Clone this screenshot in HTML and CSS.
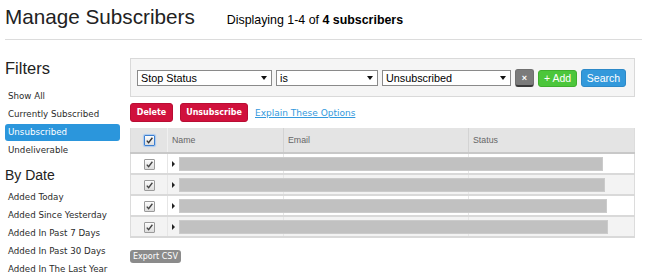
FILE: index.html
```html
<!DOCTYPE html>
<html lang="en">
<head>
    <meta charset="UTF-8">
    <meta name="viewport" content="width=device-width, initial-scale=1.0">
    <title>Manage Subscribers</title>
    <link rel="stylesheet" href="styles.css">
</head>
<body>
    <div class="page-header">
        <h1>Manage Subscribers</h1>
        <div class="count">Displaying 1-4 of <strong>4 subscribers</strong></div>
    </div>

    <div class="layout">
        <div class="sidebar">
            <h3>Filters</h3>
            <ul class="filter-list">
                <li><a href="#">Show All</a></li>
                <li><a href="#">Currently Subscribed</a></li>
                <li class="active"><a href="#">Unsubscribed</a></li>
                <li><a href="#">Undeliverable</a></li>
            </ul>
            <h4>By Date</h4>
            <ul class="filter-list date-list">
                <li><a href="#">Added Today</a></li>
                <li><a href="#">Added Since Yesterday</a></li>
                <li><a href="#">Added In Past 7 Days</a></li>
                <li><a href="#">Added In Past 30 Days</a></li>
                <li><a href="#">Added In The Last Year</a></li>
            </ul>
        </div>

        <div class="main">
            <div class="search-box">
                <span class="select field-select">
                    <select>
                        <option>Stop Status</option>
                    </select>
                </span>
                <span class="select op-select">
                    <select>
                        <option>is</option>
                    </select>
                </span>
                <span class="select value-select">
                    <select>
                        <option>Unsubscribed</option>
                    </select>
                </span>
                <button class="btn btn-remove">&times;</button>
                <button class="btn btn-add">+ Add</button>
                <button class="btn btn-search">Search</button>
            </div>

            <div class="actions">
                <button class="btn btn-danger btn-delete">Delete</button>
                <button class="btn btn-danger btn-unsub">Unsubscribe</button>
                <a href="#" class="explain">Explain These Options</a>
            </div>

            <table class="subscribers">
                <colgroup>
                    <col class="col-check">
                    <col class="col-name">
                    <col class="col-email">
                    <col class="col-status">
                </colgroup>
                <thead>
                    <tr>
                        <th class="check"><span class="cb cb-focus"><svg viewBox="0 0 9 9" width="9" height="9"><path d="M1.8 4.6 L3.6 6.6 L7.4 1.8" fill="none" stroke="#333" stroke-width="1.4"/></svg></span></th>
                        <th>Name</th>
                        <th>Email</th>
                        <th>Status</th>
                    </tr>
                </thead>
                <tbody>
                    <tr>
                        <td class="check"><span class="cb"><svg viewBox="0 0 9 9" width="9" height="9"><path d="M1.8 4.6 L3.6 6.6 L7.4 1.8" fill="none" stroke="#444" stroke-width="1.4"/></svg></span></td>
                        <td class="name"><span class="caret"></span><span class="bar" style="width: 424px"></span></td>
                        <td></td>
                        <td></td>
                    </tr>
                    <tr>
                        <td class="check"><span class="cb"><svg viewBox="0 0 9 9" width="9" height="9"><path d="M1.8 4.6 L3.6 6.6 L7.4 1.8" fill="none" stroke="#444" stroke-width="1.4"/></svg></span></td>
                        <td class="name"><span class="caret"></span><span class="bar" style="width: 426px"></span></td>
                        <td></td>
                        <td></td>
                    </tr>
                    <tr>
                        <td class="check"><span class="cb"><svg viewBox="0 0 9 9" width="9" height="9"><path d="M1.8 4.6 L3.6 6.6 L7.4 1.8" fill="none" stroke="#444" stroke-width="1.4"/></svg></span></td>
                        <td class="name"><span class="caret"></span><span class="bar" style="width: 428px"></span></td>
                        <td></td>
                        <td></td>
                    </tr>
                    <tr>
                        <td class="check"><span class="cb"><svg viewBox="0 0 9 9" width="9" height="9"><path d="M1.8 4.6 L3.6 6.6 L7.4 1.8" fill="none" stroke="#444" stroke-width="1.4"/></svg></span></td>
                        <td class="name"><span class="caret"></span><span class="bar" style="width: 429px"></span></td>
                        <td></td>
                        <td></td>
                    </tr>
                </tbody>
            </table>

            <button class="btn btn-export">Export CSV</button>
        </div>
    </div>
</body>
</html>
```

FILE: styles.css
```css
body {
    margin: 0;
    font-family: 'Liberation Sans', Arial, sans-serif;
    color: #333;
    background: #fff;
}
.page-header {
    display: flex;
    align-items: baseline;
    margin: 0 8px 0 5px;
    padding-top: 5px;
    height: 40px;
    box-sizing: border-box;
    border-bottom: 1px solid #dcdcdc;
}
h1 {
    margin: 0;
    font-size: 20.7px;
    line-height: 24px;
    font-weight: normal;
    color: #222;
}
.count {
    margin-left: 32px;
    font-size: 12.4px;
    color: #000;
}
.layout {
    display: flex;
    padding: 18px 0 0 5px;
}
.sidebar {
    width: 115px;
    flex: none;
}
.sidebar h3 {
    margin: 0 0 10px 0;
    font-size: 16.5px;
    line-height: 20px;
    font-weight: normal;
    color: #222;
}
.sidebar h4 {
    margin: 7px 0 5px 0;
    font-size: 14px;
    line-height: 18px;
    font-weight: normal;
    color: #222;
}
.filter-list {
    list-style: none;
    margin: 0;
    padding: 0;
}
.filter-list li {
    height: 17px;
    margin-bottom: 1px;
    border-radius: 3px;
}
.filter-list a {
    display: block;
    padding-left: 3px;
    font-family: 'DejaVu Sans', Verdana, sans-serif;
    font-size: 8.7px;
    line-height: 17px;
    color: #2b2b2b;
    text-decoration: none;
}
.filter-list li.active {
    background-color: #2b96dc;
}
.filter-list li.active a {
    color: #fff;
}
.main {
    margin-left: 10px;
    width: 505px;
}
.search-box {
    display: flex;
    align-items: center;
    gap: 4px;
    height: 39px;
    padding: 1px 6px 0 6px;
    box-sizing: border-box;
    border: 1px solid #d9d9d9;
    background-color: #f5f5f5;
}
.select {
    position: relative;
    display: block;
    flex: none;
}
.select select {
    appearance: none;
    display: block;
    width: 100%;
    height: 16px;
    margin: 0;
    padding: 0 12px 0 3px;
    border: 1px solid #8a8a8a;
    border-radius: 0;
    background: #fff;
    font-family: 'Liberation Sans', Arial, sans-serif;
    font-size: 10.8px;
    color: #000;
}
.select::after {
    content: "";
    position: absolute;
    right: 5px;
    top: 6px;
    border-left: 3px solid transparent;
    border-right: 3px solid transparent;
    border-top: 4px solid #111;
}
.field-select {
    width: 135px;
}
.op-select {
    width: 102px;
}
.value-select {
    width: 129px;
}
.btn {
    margin: 0;
    padding: 0;
    border: 1px solid transparent;
    border-radius: 3px;
    font-family: 'Liberation Sans', Arial, sans-serif;
    font-size: 10.5px;
    color: #fff;
    cursor: pointer;
    box-sizing: border-box;
}
.btn-remove {
    width: 19px;
    height: 18px;
    background-color: #7b7b7b;
    border-color: #707070;
    border-bottom: 2px solid #3a3a3a;
    font-size: 9px;
    font-weight: bold;
}
.btn-add {
    width: 39px;
    height: 17px;
    background-color: #4cc63b;
    border-color: #3fae2e;
}
.btn-search {
    width: 45px;
    height: 18px;
    margin-top: -1px;
    background-color: #3399db;
    border-color: #2d89c8;
}
.actions {
    display: flex;
    align-items: center;
    gap: 7px;
    margin-top: 6px;
}
.btn-danger {
    height: 19px;
    background-color: #d0113c;
    border-color: #b90d33;
    font-family: 'DejaVu Sans', Verdana, sans-serif;
    font-size: 8px;
    font-weight: bold;
}
.btn-delete {
    width: 43px;
}
.btn-unsub {
    width: 68px;
}
.explain {
    font-family: 'DejaVu Sans', Verdana, sans-serif;
    font-size: 9px;
    color: #3399dd;
}
.subscribers {
    width: 505px;
    margin-top: 6px;
    border-collapse: collapse;
    table-layout: fixed;
    border: 1px solid #dcdcdc;
    border-top: none;
}
.col-check {
    width: 37px;
}
.col-name {
    width: 116px;
}
.col-email {
    width: 185px;
}
.subscribers th {
    height: 24px;
    padding: 0 0 0 4px;
    background-color: #e4e4e4;
    border-left: 1px solid #d3d3d3;
    border-bottom: 2px solid #c8c8c8;
    text-align: left;
    font-size: 8.8px;
    font-weight: normal;
    color: #666;
}
.subscribers th:nth-child(2) {
    border-left-color: #f0f0f0;
}
.subscribers td {
    height: 19px;
    padding: 0;
    border-left: 1px solid #e6e6e6;
    border-bottom: 2px solid #d9d9d9;
    white-space: nowrap;
    vertical-align: middle;
}
.subscribers tbody tr:nth-child(even) td {
    background-color: #f3f3f3;
}
.subscribers .check {
    padding: 0;
    text-align: center;
    border-left: none;
}
.cb {
    display: inline-block;
    width: 9px;
    height: 9px;
    border: 1px solid #9a9a9a;
    border-radius: 1px;
    background: linear-gradient(#fdfdfd, #dcdcdc);
    vertical-align: middle;
    line-height: 0;
}
.cb svg {
    display: block;
}
.cb-focus {
    border-color: #3d7fd0;
    box-shadow: 0 0 1px 1px #a9c9ef;
}
.subscribers .name {
    padding-left: 4px;
}
.caret {
    display: inline-block;
    width: 0;
    height: 0;
    margin-right: 4px;
    border-left: 3px solid #222;
    border-top: 3px solid transparent;
    border-bottom: 3px solid transparent;
    vertical-align: middle;
}
.bar {
    position: relative;
    display: inline-block;
    height: 14px;
    box-sizing: border-box;
    border: 1px solid #cbcbcb;
    background-color: #c1c1c1;
    vertical-align: middle;
}
.btn-export {
    display: block;
    margin-top: 12px;
    height: 13px;
    padding: 0 3px;
    border: none;
    background-color: #8b8b8b;
    font-family: 'DejaVu Sans', Verdana, sans-serif;
    font-size: 8px;
}
```
